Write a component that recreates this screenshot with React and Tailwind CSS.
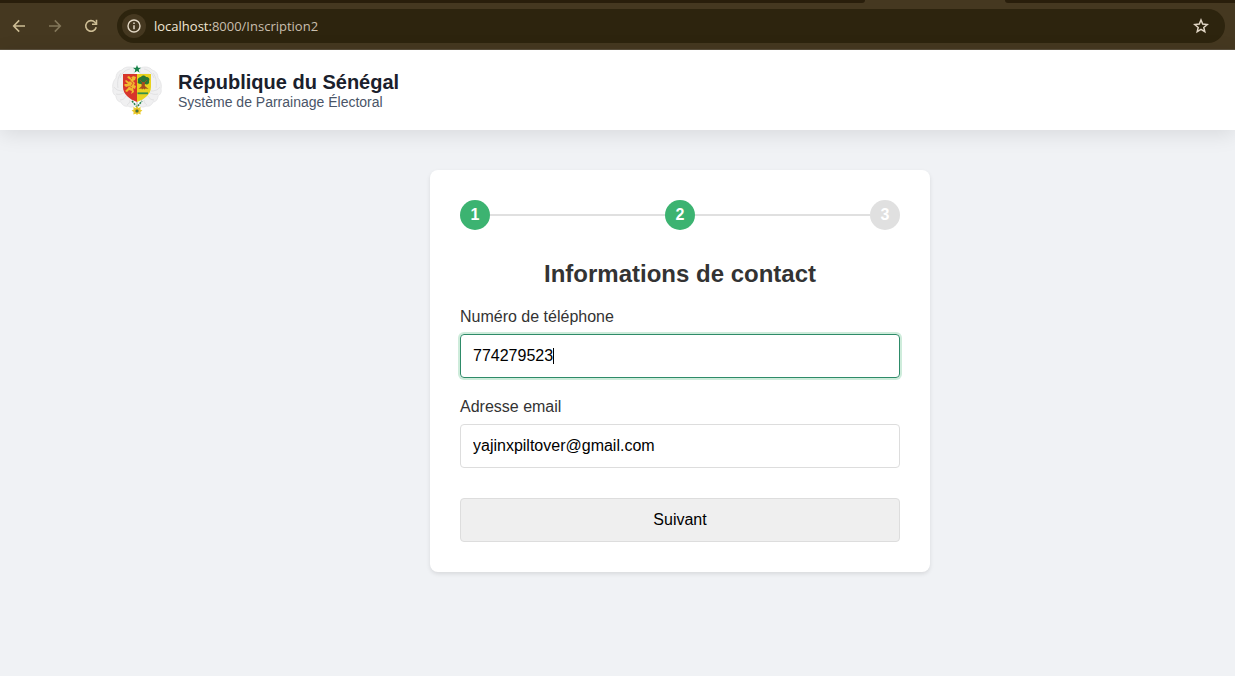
import React, { useState } from "react";

function BrowserBar() {
  return (
    <div className="bg-[#453820] font-['Open_Sans','Noto_Sans',sans-serif]">
      <div className="flex h-[3px]" aria-hidden="true">
        <div className="w-[70%] rounded-br-lg bg-[#291e0b]" />
        <div className="w-[140px]" />
        <div className="grow rounded-bl-lg bg-[#291e0b]" />
      </div>
      <div className="flex h-[47px] items-center border-b border-[#5a503d] pr-2.5 pl-3">
        <button type="button" aria-label="Retour" className="text-[#cdbd94]">
          <svg className="size-3.5" viewBox="0 0 14 14" fill="none" stroke="currentColor" strokeWidth="1.6">
            <path d="M13 7H2M7.2 1.4 1.7 7l5.5 5.6" />
          </svg>
        </button>
        <button type="button" aria-label="Avancer" className="ml-[22px] text-[#83775a]">
          <svg className="size-3.5" viewBox="0 0 14 14" fill="none" stroke="currentColor" strokeWidth="1.6">
            <path d="M1 7h11M6.8 1.4 12.3 7l-5.5 5.6" />
          </svg>
        </button>
        <button type="button" aria-label="Actualiser" className="ml-[22px] text-[#cdbd94]">
          <svg className="size-3.5" viewBox="0 0 14 14" fill="none" stroke="currentColor" strokeWidth="1.6">
            <path d="M12.2 8.2A5.3 5.3 0 1 1 10.9 3.3L12.6 5" />
            <path d="M12.5 .8v4.5H8" />
          </svg>
        </button>
        <div className="ml-[19px] flex h-[34px] grow items-center rounded-full bg-[#2d240e] pr-4 pl-[5px]">
          <button
            type="button"
            aria-label="Informations sur le site"
            className="flex size-6 items-center justify-center rounded-full bg-[#453820] text-[#e4d9c6]"
          >
            <svg className="size-3.5" viewBox="0 0 14 14" fill="none" stroke="currentColor" strokeWidth="1.4">
              <circle cx="7" cy="7" r="6" />
              <path d="M7 6.2v4M7 3.6v1.5" strokeWidth="1.5" />
            </svg>
          </button>
          <div className="ml-2 grow text-[13px] leading-5 text-[#c9bfae]">
            <span className="text-[#f1e7d6]">localhost:</span>8000/Inscription2
          </div>
          <button type="button" aria-label="Ajouter aux favoris" className="text-[#e0d5c4]">
            <svg className="size-4" viewBox="0 0 16 16" fill="none" stroke="currentColor" strokeWidth="1.5">
              <path d="m8 2 1.7 4.1 4.5.4-3.4 2.9 1 4.3L8 11.4l-3.8 2.3 1-4.3-3.4-2.9 4.5-.4z" />
            </svg>
          </button>
        </div>
      </div>
    </div>
  );
}

function CoatOfArms() {
  return (
    <svg className="size-[50px] shrink-0" viewBox="0 0 50 50" role="img" aria-label="Armoiries du Sénégal">
      <g fill="#f0f0f1" stroke="#dededf" strokeWidth=".6">
        <path d="M22 3C17 1 12 2 10 5 6 6 4 9 4 13 1 16 0 21 1 24c-1 3 1 6 3 7 0 3 2 6 5 6 1 3 4 5 7 4 3 2 6 1 7-1l-2-4-8-8V9h9z" />
        <path d="M28 3c5-2 10-1 12 2 4 1 6 4 6 8 3 3 4 8 3 11 1 3-1 6-3 7 0 3-2 6-5 6-1 3-4 5-7 4-3 2-6 1-7-1l2-4 8-8V9h-9z" />
      </g>
      <g fill="none" stroke="#d6d6d8" strokeWidth=".6">
        <path d="M18 4c-5 1-8 4-10 9M9 8c-3 4-4 9-3 15M2 22c2 3 5 4 9 4M4 29c3 1 6 0 8-1M8 35c3 0 5-2 6-4M15 40c2-1 3-3 3-5" />
        <path d="M32 4c5 1 8 4 10 9M41 8c3 4 4 9 3 15M48 22c-2 3-5 4-9 4M46 29c-3 1-6 0-8-1M42 35c-3 0-5-2-6-4M35 40c-2-1-3-3-3-5" />
      </g>
      <path fill="#d7352b" d="M11 9h14v28C17 34 11 29 11 22z" />
      <path fill="#e8d21d" d="M25 9h14v13c0 7-6 12-14 15z" />
      <path
        fill="#f0b92f"
        d="m15 12 2-1 2 2 2-2 3 1-1 3-2 1 2 2-1 2 2 1-1 3-2-1 1 4-3 2 1-3-3-1-2 2-2-1 3-3 1-2-3 1-2-2 1-1 3 0-3-3 1-1 3 2 2-2-2-1z"
      />
      <path stroke="#d7352b" strokeWidth=".7" d="m18 16 3 2-2 3M19 13l1 1M17 21l3 2" fill="none" />
      <path fill="#297736" d="M26 16c-1-3 2-4 3-4 1-2 4-2 5 0 3 0 4 2 3 4 1 3-2 4-4 3-2 1-3 1-4 0-3 0-4-1-3-3z" />
      <path fill="#a44c20" d="M30 17h3l-.2 4 3.7 3-3-.4-1 1-1-1-1.5 1-.5-1-3 .4 3-2.8z" />
      <path stroke="#a44c20" strokeWidth=".8" d="m28 15 3 3m4-3-3 3" />
      <path stroke="#31904a" strokeWidth="1.8" d="M25.5 28.3H36" />
      <path fill="#18834a" d="m25 0 1.1 2.8H29l-2.3 1.9.9 3L25 5.9l-2.6 1.8.9-3L21 2.8h2.9z" />
      <path fill="none" stroke="#22844a" strokeWidth="1.5" strokeDasharray="2 1" d="m20 36 5 6 5-6" />
      <path stroke="#aaa" d="M25 37v6" />
      <path fill="#e9ca2a" d="m25 41 1.3 2 2.4-.9-.4 2.5 2.1 1-2 1.3.3 2.6-2.4-.8L25 50l-1.3-1.3-2.4.8.3-2.6-2-1.3 2.1-1-.4-2.5 2.4.9z" />
      <circle cx="25" cy="46" r="1.8" fill="#8f6c29" />
      <circle cx="25" cy="46" r=".9" fill="#18834a" />
    </svg>
  );
}

function SiteHeader() {
  return (
    <header className="relative flex h-20 items-center gap-4 bg-white pl-28 shadow-[0_4px_20px_rgba(0,0,0,0.1)]">
      <CoatOfArms />
      <div>
        <p className="text-xl leading-6 font-bold text-[#1a202c]">République du Sénégal</p>
        <p className="text-sm leading-4 text-[#4a5568]">Système de Parrainage Électoral</p>
      </div>
    </header>
  );
}

function Steps({ current }) {
  return (
    <ol className="mb-[30px] flex items-center font-bold text-white">
      {[1, 2, 3].map((step) => (
        <li key={step} className={step > 1 ? "flex grow items-center" : "flex items-center"}>
          {step > 1 && <span className="h-0.5 grow bg-[#e0e0e0]" />}
          <span
            className={
              step <= current
                ? "flex size-[30px] items-center justify-center rounded-full bg-[#3cb371]"
                : "flex size-[30px] items-center justify-center rounded-full bg-[#e0e0e0]"
            }
          >
            {step}
          </span>
        </li>
      ))}
    </ol>
  );
}

export default function App() {
  const [phone, setPhone] = useState("774279523");
  const [email, setEmail] = useState("yajinxpiltover@gmail.com");

  return (
    <div className="min-h-screen bg-[#f0f2f5] font-['Liberation_Sans',Arial,sans-serif] text-base leading-[18px] text-[#333]">
      <BrowserBar />
      <SiteHeader />
      <main className="flex justify-center py-10 pl-[125px]">
        <form
          className="w-full max-w-[500px] rounded-lg bg-white p-[30px] shadow-[0_2px_4px_rgba(0,0,0,0.1)]"
          onSubmit={(event) => event.preventDefault()}
        >
          <Steps current={2} />
          <h1 className="mb-5 text-center text-2xl leading-7 font-bold">Informations de contact</h1>
          <label htmlFor="phone" className="mb-2 block">
            Numéro de téléphone
          </label>
          <div className="relative mb-5">
            <input
              id="phone"
              type="tel"
              value={phone}
              onChange={(event) => setPhone(event.target.value)}
              className="block h-11 w-full rounded border border-[#2e8b69] px-3 text-black ring-2 ring-[#3cb371]/25 outline-none"
            />
            <span className="absolute top-3.5 left-[93px] h-4 w-px bg-black" aria-hidden="true" />
          </div>
          <label htmlFor="email" className="mb-2 block">
            Adresse email
          </label>
          <input
            id="email"
            type="email"
            value={email}
            onChange={(event) => setEmail(event.target.value)}
            className="mb-[30px] block h-11 w-full rounded border border-[#ddd] px-3 text-black outline-none"
          />
          <button type="submit" className="block h-11 w-full rounded border border-[#ddd] bg-[#efefef] text-black">
            Suivant
          </button>
        </form>
      </main>
    </div>
  );
}
